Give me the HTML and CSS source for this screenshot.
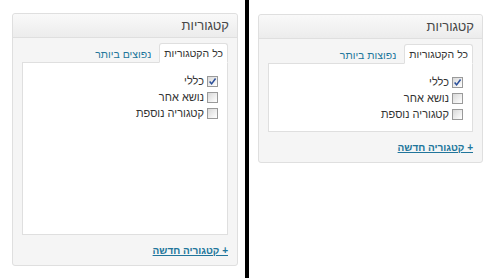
FILE: index.html
```html
<!DOCTYPE html>
<html lang="he" dir="rtl">
<head>
<meta charset="utf-8">
<title>קטגוריות</title>
<link rel="stylesheet" href="styles.css">
</head>
<body>
<div class="stage">
  <div class="col col-right">
    <div class="box">
      <div class="box-head">קטגוריות</div>
      <div class="box-body">
        <div class="tabs">
          <span class="tab tab-active">כל הקטגוריות</span>
          <a class="tab" href="#">נפוצות ביותר</a>
        </div>
        <div class="panel panel-short">
          <ul class="cats">
            <li><span class="cb cb-on"><svg viewBox="0 0 10 10" width="9" height="9"><path d="M1.8 5 L4 7.6 L8.4 1.6" fill="none" stroke="#2b4f9a" stroke-width="1.7"/></svg></span>כללי</li>
            <li><span class="cb"></span>נושא אחר</li>
            <li><span class="cb"></span>קטגוריה נוספת</li>
          </ul>
        </div>
        <a class="add" href="#">+ קטגוריה חדשה</a>
      </div>
    </div>
  </div>
  <div class="divider"></div>
  <div class="col col-left">
    <div class="box">
      <div class="box-head">קטגוריות</div>
      <div class="box-body">
        <div class="tabs">
          <span class="tab tab-active">כל הקטגוריות</span>
          <a class="tab" href="#">נפוצים ביותר</a>
        </div>
        <div class="panel panel-tall">
          <ul class="cats">
            <li><span class="cb cb-on"><svg viewBox="0 0 10 10" width="9" height="9"><path d="M1.8 5 L4 7.6 L8.4 1.6" fill="none" stroke="#2b4f9a" stroke-width="1.7"/></svg></span>כללי</li>
            <li><span class="cb"></span>נושא אחר</li>
            <li><span class="cb"></span>קטגוריה נוספת</li>
          </ul>
        </div>
        <a class="add" href="#">+ קטגוריה חדשה</a>
      </div>
    </div>
  </div>
</div>
</body>
</html>
```
FILE: styles.css
```css
html, body {
  margin: 0;
  padding: 0;
  background: #fff;
}
body {
  font-family: "Liberation Sans", "DejaVu Sans", sans-serif;
  color: #333;
}
.stage {
  display: flex;
  height: 278px;
  width: 500px;
}
.col {
  box-sizing: border-box;
}
.col-right {
  width: 251px;
  padding: 14px 17px 0 9px;
}
.col-left {
  width: 245px;
  padding: 13px 7px 0 12px;
}
.divider {
  width: 4px;
  background: #000;
}
.box {
  border: 1px solid #dfdfdf;
  border-radius: 3px;
  background: #f5f5f5;
}
.box-head {
  height: 23px;
  line-height: 23px;
  padding: 0 8px;
  font-size: 13px;
  color: #464646;
  background: linear-gradient(#f9f9f9, #ececec);
  border-bottom: 1px solid #dfdfdf;
  border-radius: 3px 3px 0 0;
}
.box-body {
  padding: 6px 9px 8px 9px;
}
.tabs {
  display: flex;
  align-items: flex-end;
  gap: 4px;
  font-size: 10.5px;
  height: 19px;
  margin-bottom: -1px;
  position: relative;
}
.tab {
  display: block;
  line-height: 18px;
  padding: 0 4px;
  color: #21759b;
  text-decoration: none;
}
.tab-active {
  color: #333;
  background: #fff;
  border: 1px solid #dfdfdf;
  border-bottom-color: #fff;
  border-radius: 3px 3px 0 0;
  padding: 0 4px;
}
.panel {
  background: #fff;
  border: 1px solid #dfdfdf;
  box-sizing: border-box;
}
.panel-short { height: 69px; }
.panel-tall { height: 173px; }
.cats {
  list-style: none;
  margin: 0;
  padding: 10px 9px 0 0;
  font-size: 11px;
}
.cats li {
  display: flex;
  align-items: center;
  height: 16px;
}
.cb {
  box-sizing: border-box;
  width: 11px;
  height: 11px;
  border: 1px solid #9a9a9a;
  background: linear-gradient(135deg, #d8d8d8, #f4f4f4 70%, #fff);
  margin-left: 3px;
  display: flex;
  align-items: center;
  justify-content: center;
}
.cb svg { display: block; }
.add {
  display: block;
  margin-top: 10px;
  font-size: 10px;
  font-weight: bold;
  color: #21759b;
  text-decoration: underline;
  line-height: 12px;
}
```
